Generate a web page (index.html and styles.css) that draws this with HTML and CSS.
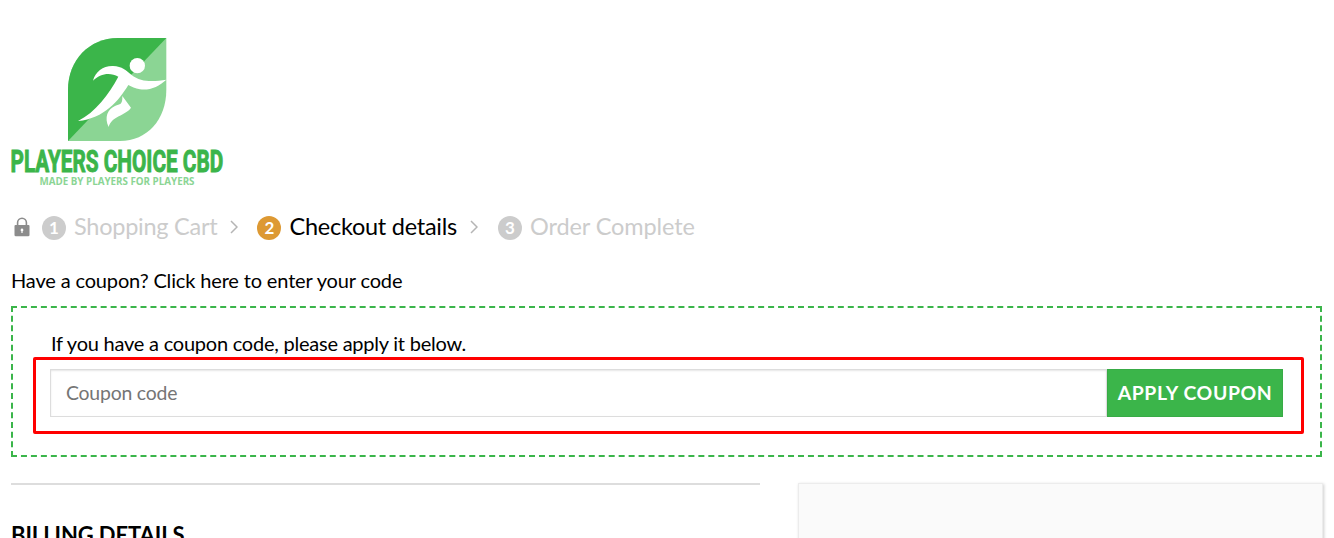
FILE: index.html
```html
<!DOCTYPE html>
<html lang="en">
<head>
  <meta charset="UTF-8">
  <title>Checkout - Players Choice CBD</title>
  <link rel="stylesheet" href="styles.css">
</head>
<body>
  <header class="header">
    <svg class="logo" width="213" height="150" viewBox="0 0 213 150" role="img" aria-label="Players Choice CBD">
      <g transform="translate(49 -8) scale(.3333)">
        <path fill="#8bd594" d="M24 333V180C24 90 88 24 175 24H319V180C319 268 262 333 180 333Z"/>
        <path fill="#3bb54a" d="M24 333V180C24 90 88 24 175 24H319Z"/>
        <circle fill="#fff" cx="232" cy="107" r="23"/>
        <path fill="#fff" d="M99 152C106 125 130 107 159 108C187 109 199 122 214 134C244 158 281 155 319 149C297 169 270 182 240 178C225 176 215 170 205 165C177 211 133 266 54 273C107 246 146 194 175 140C150 125 119 131 99 152Z"/>
        <path fill="#fff" d="M187 198L213 233C197 257 154 258 146 291C132 263 143 237 165 228C180 222 188 225 187 198Z"/>
      </g>
      <text class="logo-name" transform="translate(-.5 134) scale(.62 1)" textLength="343" lengthAdjust="spacingAndGlyphs">PLAYERS CHOICE CBD</text>
      <text class="logo-tagline" x="28.5" y="147" textLength="155" lengthAdjust="spacingAndGlyphs">MADE BY PLAYERS FOR PLAYERS</text>
    </svg>
  </header>

  <nav class="steps">
    <svg class="lock" width="16" height="20" viewBox="0 0 16 20">
      <path fill="none" stroke="#8c8c8c" stroke-width="1.6" d="M3.6 9V5.6a4.4 4.4 0 0 1 8.8 0V9"/>
      <path fill="#8c8c8c" fill-rule="evenodd" d="M1.5 8h13q1 0 1 1v9q0 1.300-1.300 1.300H1.800Q.5 19.300.5 18V9q0-1 1-1zM8 11.500a1.500 1.500 0 0 0-.6 2.800V16h1.200v-1.700a1.500 1.500 0 0 0-.6-2.800z"/>
    </svg>
    <a class="step"><span class="number">1</span>Shopping Cart</a>
    <svg class="arrow" width="8" height="14" viewBox="0 0 8 14"><path d="M1 1l6 6-6 6"/></svg>
    <a class="step current"><span class="number">2</span>Checkout details</a>
    <svg class="arrow" width="8" height="14" viewBox="0 0 8 14"><path d="M1 1l6 6-6 6"/></svg>
    <a class="step last"><span class="number">3</span>Order Complete</a>
  </nav>

  <p class="coupon-toggle">Have a coupon? Click here to enter your code</p>

  <form class="coupon">
    <p class="coupon-text">If you have a coupon code, please apply it below.</p>
    <div class="highlight">
      <input type="text" class="coupon-input" placeholder="Coupon code">
      <button type="button" class="coupon-button">Apply coupon</button>
    </div>
  </form>

  <main class="checkout">
    <section class="billing">
      <h3>Billing details</h3>
    </section>
    <aside class="order"></aside>
  </main>
</body>
</html>
```
FILE: styles.css
```css
* {
  box-sizing: border-box;
}
body {
  margin: 0;
  height: 538px;
  padding: 38px 11px 0;
  overflow: hidden;
  background: #fff;
  color: #000;
  font-family: Lato, sans-serif;
  font-size: 20px;
}
p, h3 {
  margin: 0;
}
.header {
  height: 150px;
}
.logo {
  display: block;
}
.logo-name {
  font-family: Roboto, sans-serif;
  font-size: 31px;
  font-weight: 700;
  fill: #3bb54a;
  stroke: #3bb54a;
  stroke-width: 1;
}
.logo-tagline {
  font-family: "Open Sans", sans-serif;
  font-size: 10px;
  font-weight: 700;
  fill: #8bd594;
}
.steps {
  display: flex;
  align-items: center;
  height: 30px;
  margin-top: 23px;
  font-size: 23.5px;
  letter-spacing: -0.25px;
}
.lock {
  margin: 2px 12px 0 3px;
}
.step {
  display: flex;
  align-items: center;
  color: #ccc;
  white-space: nowrap;
}
.number {
  width: 24px;
  height: 24px;
  margin: 3px 8px 0 0;
  border-radius: 50%;
  background: #ccc;
  color: #fff;
  font-size: 17px;
  font-weight: 700;
  letter-spacing: 0;
  line-height: 24px;
  text-align: center;
}
.current {
  color: #000;
}
.current .number {
  background: #dd9933;
}
.last {
  margin-left: 1px;
  letter-spacing: -0.1px;
}
.arrow {
  margin: 2px 19px 0 13px;
  fill: none;
  stroke: #b5b5b5;
  stroke-width: 1.5;
}
.coupon-toggle {
  margin-top: 24px;
  letter-spacing: -0.15px;
  line-height: 30px;
}
.coupon {
  height: 151px;
  margin: 11px 1px 0 0;
  padding: 21px 16px 0 20px;
  border: 2px dashed #3bb54a;
}
.coupon-text {
  margin-left: 18px;
  letter-spacing: -0.23px;
  line-height: 28px;
}
.highlight {
  display: flex;
  height: 77px;
  padding: 9px 18px 14px 14px;
  border: 3px solid #f00;
  border-radius: 2px;
}
.coupon-input {
  flex: 1;
  height: 48px;
  padding: 0 15px 2px;
  border: 1px solid #ddd;
  box-shadow: inset 0 1px 2px rgba(0, 0, 0, 0.1);
  color: #333;
  font-family: inherit;
  font-size: 19.4px;
  letter-spacing: -0.2px;
}
.coupon-input::placeholder {
  color: #757575;
}
.coupon-button {
  width: 176px;
  height: 48px;
  padding: 0 0 2px;
  border: 1px solid rgba(0, 0, 0, 0.05);
  background: #3bb54a;
  color: #fff;
  font-family: inherit;
  font-size: 19.4px;
  font-weight: 700;
  letter-spacing: 0.6px;
  text-transform: uppercase;
}
.checkout {
  display: flex;
  justify-content: space-between;
  margin-top: 26px;
}
.billing {
  width: 749px;
  padding-top: 34px;
  border-top: 2px solid #ddd;
}
.billing h3 {
  font-size: 22px;
  font-weight: 700;
  letter-spacing: -0.1px;
  line-height: 32px;
  text-transform: uppercase;
}
.order {
  width: 525px;
  height: 80px;
  border: 1px solid #ececec;
  background: #fafafa;
  box-shadow: 1px 1px 3px rgba(0, 0, 0, 0.2);
}
```
